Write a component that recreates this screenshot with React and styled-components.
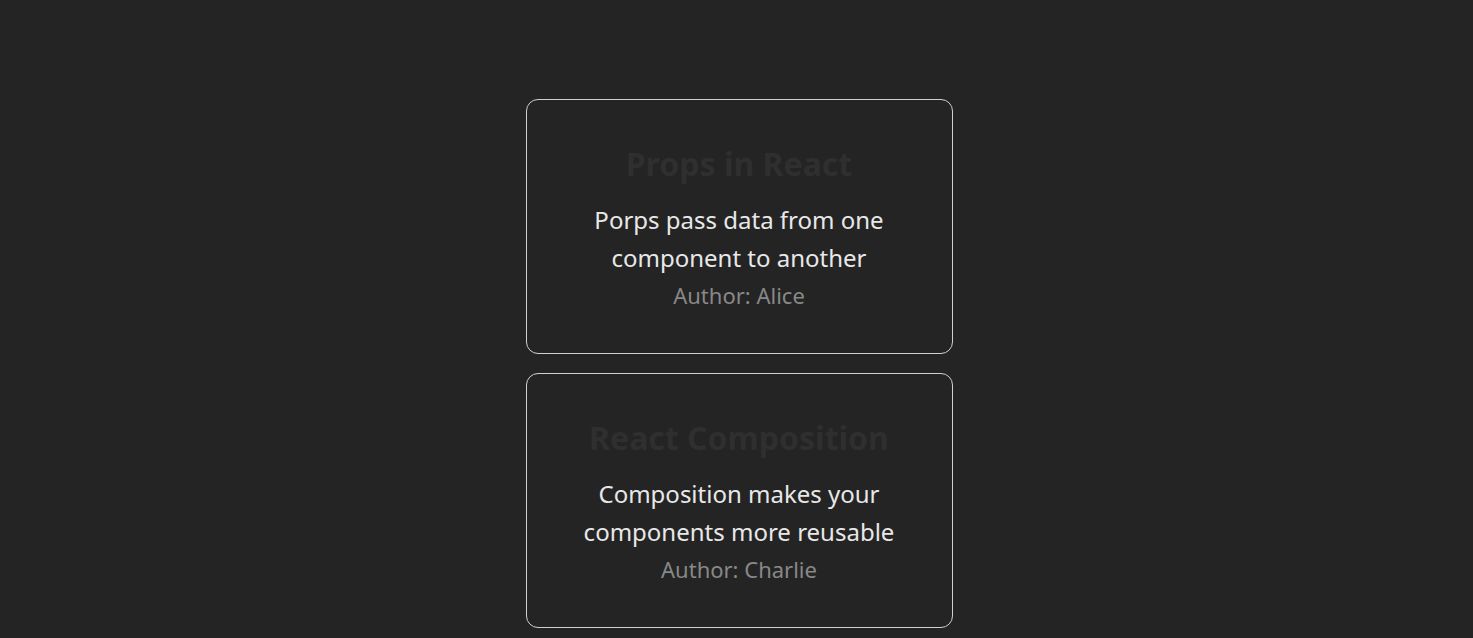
import React from 'react';
import styled, { createGlobalStyle } from 'styled-components';

const GlobalStyle = createGlobalStyle`
  body {
    margin: 0;
    background: #242424;
    font-family: "Noto Sans", "Noto Sans CJK KR", sans-serif;
  }
`;

const Page = styled.div`
  display: flex;
  flex-direction: column;
  align-items: center;
  gap: 19px;
  padding: 99px 0 0 5px;
`;

const Card = styled.div`
  box-sizing: border-box;
  width: 427px;
  height: 255px;
  padding: 44px 30px 0;
  border: 1px solid #d0d0d0;
  border-radius: 12px;
  text-align: center;
`;

const Title = styled.h1`
  margin: 0;
  font-size: 32px;
  line-height: 40px;
  font-weight: 700;
  color: #2f2f2f;
`;

const Body = styled.p`
  margin: 17px auto 0;
  max-width: 330px;
  font-size: 24px;
  line-height: 38px;
  color: #e8e8e8;
`;

const Author = styled.p`
  margin: 3px 0 0;
  font-size: 22px;
  line-height: 30px;
  color: #888;
`;

const posts = [
  { title: 'Props in React', body: 'Porps pass data from one component to another', author: 'Alice' },
  { title: 'React Composition', body: 'Composition makes your components more reusable', author: 'Charlie' },
];

const PostCard = ({ title, body, author }) => (
  <Card>
    <Title>{title}</Title>
    <Body>{body}</Body>
    <Author>Author: {author}</Author>
  </Card>
);

export default function App() {
  return (
    <>
      <GlobalStyle />
      <Page>
        {posts.map(p => <PostCard key={p.title} {...p} />)}
      </Page>
    </>
  );
}
